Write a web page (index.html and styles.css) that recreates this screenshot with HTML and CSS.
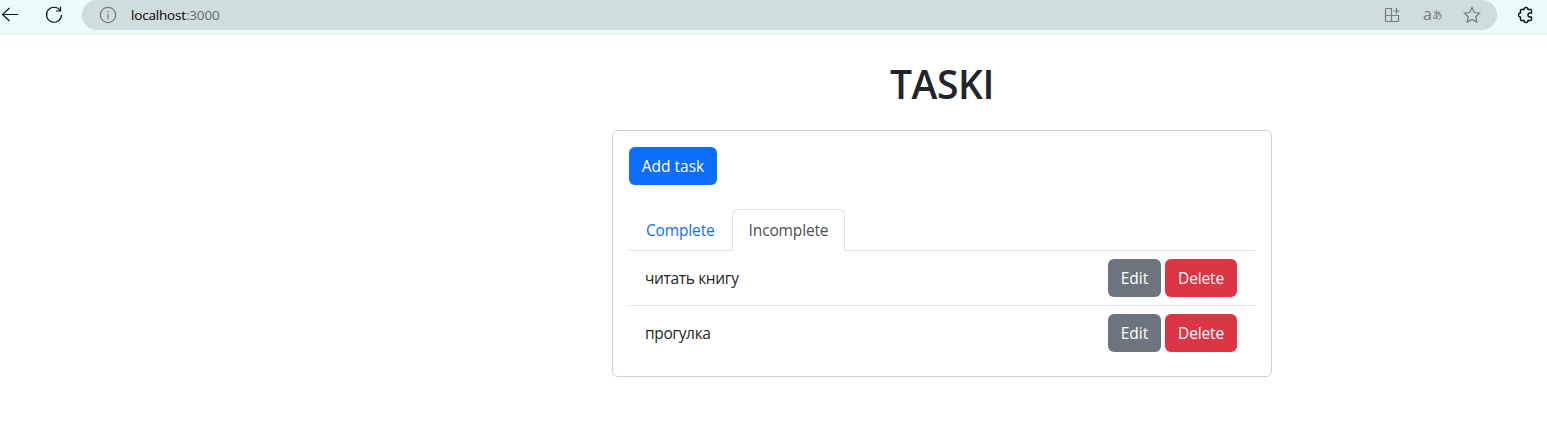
FILE: index.html
```html
<!DOCTYPE html>
<html lang="en">
<head>
<meta charset="utf-8">
<title>TASKI</title>
<link rel="stylesheet" href="styles.css">
</head>
<body>
<header class="toolbar">
  <svg class="icon back" width="19" height="16" viewBox="0 0 19 16"><path d="M18 7.500H2.500M9.500 1 2.500 7.500l7 6.500"/></svg>
  <svg class="icon reload" width="18" height="18" viewBox="0 0 18 18"><path d="M15.200 4.500A7.500 7.500 0 1 0 16.500 9M15.500 .8V5H11"/></svg>
  <div class="address">
    <svg class="icon info" width="18" height="18" viewBox="0 0 18 18"><circle cx="9" cy="9" r="7.700"/><path d="M9 8v5M9 5v1.400"/></svg>
    <span class="url">localhost<span class="port">:3000</span></span>
    <svg class="icon apps" width="16" height="16" viewBox="0 0 16 16"><path d="M8 1.500H2.500a1 1 0 0 0-1 1v11a1 1 0 0 0 1 1h11a1 1 0 0 0 1-1V8.500H1.500M7.500 1.500v13M12.500 1v6M9.500 4h6"/></svg>
    <span class="translate">a<span class="kana">あ</span></span>
    <svg class="icon star" width="18" height="18" viewBox="0 0 18 18"><path d="m9 1.500 2.300 5 5.400.6-4 3.700 1.100 5.400L9 13.500l-4.800 2.700 1.100-5.400-4-3.700 5.400-.6z"/></svg>
  </div>
  <svg class="icon puzzle" width="16" height="18" viewBox="0 0 16 18"><path d="M3.500 3.500H6a2 2 0 0 1 4 0h2.500a1 1 0 0 1 1 1V7H12a1.800 1.800 0 0 0 0 4h1.500v2.500a1 1 0 0 1-1 1H10a2 2 0 0 1-4 0H3.500a1 1 0 0 1-1-1V11a2 2 0 0 1 0-4V4.500a1 1 0 0 1 1-1z"/></svg>
</header>
<main class="page">
  <h1 class="title">TASKI</h1>
  <section class="card">
    <button class="btn add">Add task</button>
    <nav class="tabs">
      <a class="tab complete">Complete</a>
      <a class="tab active">Incomplete</a>
    </nav>
    <ul class="tasks">
      <li class="task"><span class="name">читать книгу</span><button class="btn edit">Edit</button><button class="btn delete">Delete</button></li>
      <li class="task"><span class="name">прогулка</span><button class="btn edit">Edit</button><button class="btn delete">Delete</button></li>
    </ul>
  </section>
</main>
</body>
</html>
```
FILE: styles.css
```css
* { box-sizing: border-box; }
body { margin: 0; background: #fff; color: #212529; font: 15.500px/24px "Open Sans", "Noto Sans", sans-serif; }
.toolbar { display: flex; height: 34px; padding-bottom: 4px; align-items: center; background: #e9fbfa; border-bottom: 1px solid #dfeeed; }
.icon { flex: none; fill: none; stroke: #111; stroke-width: 1.200; }
.reload { margin-left: 26px; }
.address { display: flex; align-items: center; width: 1415px; height: 30px; margin-left: 19px; padding: 0 16px 0 17px; border-radius: 15px; background: #cfdddc; }
.address .icon { stroke: #747c7b; }
.url { margin-left: 14px; margin-right: auto; color: #000; font-size: 13.500px; letter-spacing: -0.180px; white-space: nowrap; }
.port { color: #636b6a; }
.translate { display: flex; align-items: center; width: 18px; margin: 0 22px 0 23px; color: #747c7b; font-size: 16px; line-height: 18px; }
.translate { padding-bottom: 2px; }
.kana { padding-top: 2px; font: 10.500px/18px "Noto Sans CJK JP", sans-serif; }
.puzzle { margin-left: 21px; stroke-width: 1.400; }
.page { width: 660px; margin-left: 612px; }
.title { margin: 0; padding-top: 26px; height: 96px; text-align: center; font-size: 39px; font-weight: 600; line-height: 48px; letter-spacing: -0.400px; }
.card { height: 247px; padding: 16px; border: 1px solid #cfd0d1; border-radius: 6px; }
.btn { display: block; height: 38px; padding: 0; border: 0; border-radius: 6px; color: #fff; font: inherit; white-space: nowrap; }
.add { width: 88px; background: #0d6efd; }
.tabs { display: flex; height: 42px; margin-top: 24px; border-bottom: 1px solid #dee2e6; }
.tab { height: 42px; padding: 8px 16px; border: 1px solid transparent; border-radius: 6px 6px 0 0; letter-spacing: -0.150px; }
.complete { width: 103px; color: #0d6efd; }
.active { width: 113px; padding: 8px 0; text-align: center; color: #495057; background: #fff; border-color: #dee2e6; border-bottom-color: #fff; }
.tasks { margin: 0; padding: 0; list-style: none; }
.task { display: flex; gap: 4px; height: 55px; padding: 8px 18px 8px 16px; border-bottom: 1px solid #dee2e6; }
.task:last-child { border-bottom: 0; }
.name { margin-right: auto; line-height: 38px; letter-spacing: -0.350px; }
.edit { width: 53px; background: #6c757d; }
.delete { width: 72px; background: #dc3545; letter-spacing: -0.150px; }
```
